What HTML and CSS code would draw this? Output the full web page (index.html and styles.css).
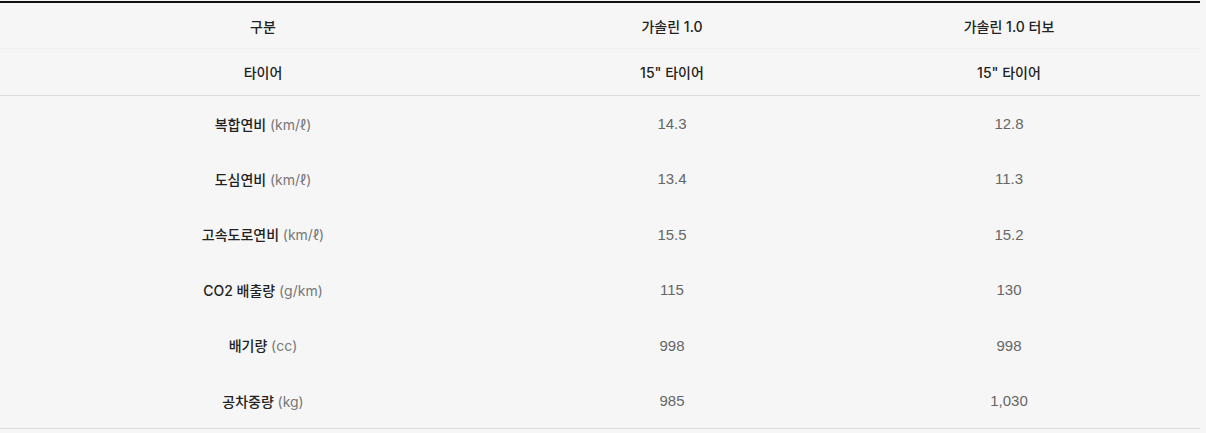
FILE: index.html
```html
<!DOCTYPE html>
<html>
<head>
    <title>제원</title>
    <link rel="stylesheet" href="styles.css">
</head>
<body>

<table class="spec-table">
    <colgroup>
        <col class="col-label">
        <col class="col-base">
        <col class="col-turbo">
    </colgroup>
    <thead>
        <tr class="head-row">
            <th>구분</th>
            <th>가솔린 1.0</th>
            <th>가솔린 1.0 터보</th>
        </tr>
        <tr class="head-row head-last">
            <th>타이어</th>
            <th>15" 타이어</th>
            <th>15" 타이어</th>
        </tr>
    </thead>
    <tbody>
        <tr>
            <th>복합연비 <span class="unit">(km/ℓ)</span></th>
            <td>14.3</td>
            <td>12.8</td>
        </tr>
        <tr>
            <th>도심연비 <span class="unit">(km/ℓ)</span></th>
            <td>13.4</td>
            <td>11.3</td>
        </tr>
        <tr>
            <th>고속도로연비 <span class="unit">(km/ℓ)</span></th>
            <td>15.5</td>
            <td>15.2</td>
        </tr>
        <tr>
            <th>CO2 배출량 <span class="unit">(g/km)</span></th>
            <td>115</td>
            <td>130</td>
        </tr>
        <tr>
            <th>배기량 <span class="unit">(cc)</span></th>
            <td>998</td>
            <td>998</td>
        </tr>
        <tr>
            <th>공차중량 <span class="unit">(kg)</span></th>
            <td>985</td>
            <td>1,030</td>
        </tr>
    </tbody>
</table>

</body>
</html>
```

FILE: styles.css
```css
body {
    margin: 0;
    padding-top: 1px;
    background-color: #f6f6f6;
    font-family: Inter, "Noto Sans CJK KR", sans-serif;
    font-size: 14px;
    color: #222;
}
.spec-table {
    width: 1200px;
    border-collapse: collapse;
    table-layout: fixed;
    border-top: 2px solid #111;
    border-bottom: 1px solid #ddd;
}
.col-label {
    width: 526px;
}
.col-base {
    width: 292px;
}
.col-turbo {
    width: 382px;
}
th, td {
    text-align: center;
    padding: 0;
}
th {
    font-weight: 500;
    color: #222;
}
td {
    color: #666;
    font-family: "Liberation Sans", "Noto Sans CJK KR", sans-serif;
    font-size: 15px;
}
.head-row th {
    height: 45px;
    border-bottom: 1px solid #efefef;
}
.head-last th {
    height: 46px;
    border-bottom: 1px solid #dcdcdc;
}
tbody tr {
    height: 55.5px;
}
.unit {
    color: #777;
    font-weight: 400;
}
```
